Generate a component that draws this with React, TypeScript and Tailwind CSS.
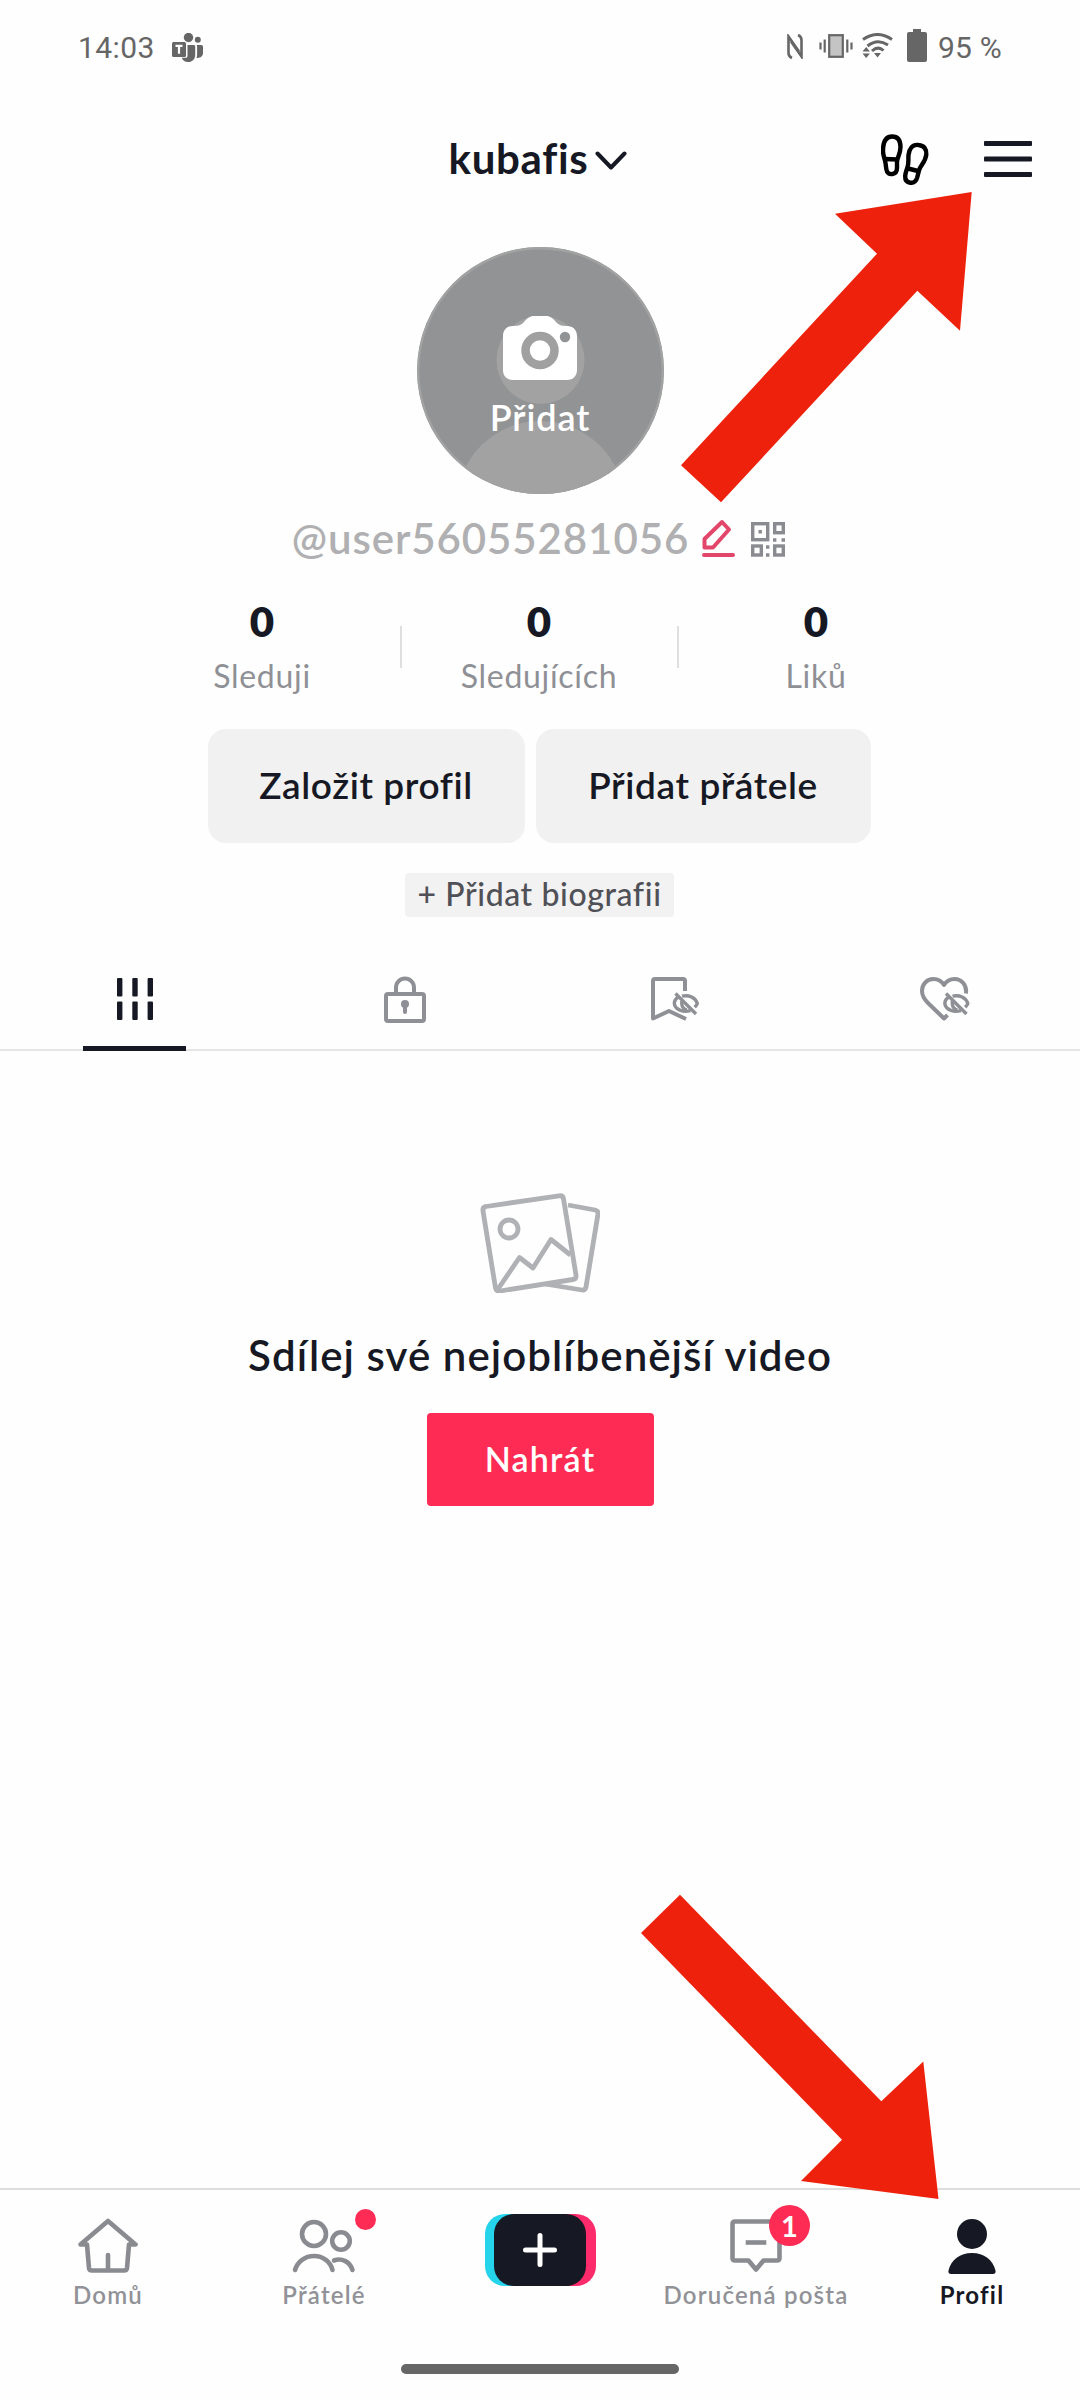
import type { ReactNode } from "react"
import clsx from "clsx"

function TeamsIcon() {
  return (
    <svg width="32" height="30" viewBox="0 0 32 30" fill="#666">
      <circle cx="16.5" cy="4.5" r="4.7" />
      <circle cx="25.8" cy="6.8" r="3" />
      <path d="M24.5 12h4.7c1.1 0 1.8.7 1.8 1.8v6c0 3.3-2.3 5.2-5.200 5.200-.8 0-1.300-.1-1.300-.1.4-1 .6-2.200.6-3.400V13.500c0-.6-.2-1.100-.6-1.500z" />
      <path d="M15.500 12h6.200c.8 0 1.500.7 1.500 1.500v8.200c0 4.200-2.800 7.300-7 7.300-3.200 0-5.500-1.600-6.500-4.300h4.300c.9 0 1.500-.7 1.500-1.500z" />
      <rect x="0" y="9" width="14" height="15" rx="1.500" />
      <path d="M3.500 12.800h7M7 12.800v8" stroke="#fff" strokeWidth="2.200" fill="none" />
    </svg>
  )
}

function StatusBar() {
  return (
    <div className="flex h-24 items-center justify-between px-[78px] font-['Roboto'] text-[30px] leading-none text-[#666]">
      <div className="flex items-center">
        <span className="tracking-[0.4px]">14:03</span>
        <span className="ml-[17px]">
          <TeamsIcon />
        </span>
      </div>
      <div className="flex items-center">
        <svg width="16" height="25" viewBox="0 0 16 25" className="-mt-1" fill="none" stroke="#666" strokeWidth="2.600">
          <path d="M5 24c-2.500-1-3.500-2-3.500-5V2.500L12 17.500" />
          <path d="M11 1c2.500 1 3.500 2 3.500 5v16.500L4 7.500" />
        </svg>
        <svg width="34" height="24" viewBox="0 0 34 24" className="-mt-1 ml-4" stroke="#666" strokeWidth="2.200">
          <rect x="10.200" y="1.200" width="13.600" height="21.600" fill="#c4c4c4" />
          <path d="M1.500 8.500v7M5.700 5.500v13M28.300 5.500v13M32.500 8.500v7" />
        </svg>
        <svg width="31" height="26" viewBox="0 0 31 26" className="-mt-1 ml-[9px]" fill="none" stroke="#666" strokeWidth="3">
          <path d="M1 6.500Q15.500-3.500 30 6.500" />
          <path d="M5.500 13Q15.500 5 26 12" />
          <path d="M10 18Q16 12.500 21.500 17.500" />
          <path d="M.5 18.500L4.200 14l3.700 4.500zM.5 20.500L4.200 25l3.700-4.500zM12 20h7l-3.500 4.500z" fill="#666" stroke="none" />
        </svg>
        <svg width="20" height="33" viewBox="0 0 20 33" className="-mt-1.5 ml-[14px]" fill="#666">
          <path d="M6 0h8v3h4a2 2 0 0 1 2 2v26a2 2 0 0 1-2 2H2a2 2 0 0 1-2-2V5a2 2 0 0 1 2-2h4z" />
        </svg>
        <span className="ml-[11px] tracking-[0.2px]">95 %</span>
      </div>
    </div>
  )
}

function Header() {
  return (
    <header className="grid h-[124px] grid-cols-[1fr_auto_1fr] items-center pr-12">
      <div />
      <div className="flex items-center pl-[43px] text-[#161823]">
        <h1 className="text-[42px] leading-none font-bold tracking-[0.7px]">kubafis</h1>
        <svg width="32" height="20" viewBox="0 0 32 20" className="mt-[5px] ml-[6px]" fill="none" stroke="currentColor" strokeWidth="4">
          <path d="M2.500 2.500L16 16.500L29.500 2.500" strokeLinecap="round" strokeLinejoin="round" />
        </svg>
      </div>
      <div className="flex items-center justify-end gap-[55px]">
        <svg width="48" height="52" viewBox="0 0 48 52" className="mt-[3px]" fill="none" stroke="#000" strokeWidth="4.400" strokeLinejoin="round">
          <path d="M11 2.500C5 2.500 2 8 2 17c0 5 2 8 2.500 12l.8 6c.6 4 3 5.500 6 5 3.500-.5 4.700-3 4.700-6V28c0-4 3.500-8 3.500-15C19.500 6 17 2.500 11 2.500z" />
          <path d="M4 25l12.500.5" />
          <path d="M37.500 11c-6-1-9.500 4-10 10-.4 5 .5 8-1 12-1 4-2 5-2.300 9-.2 4 2 6.300 5 6.700 4 .5 6-1.700 7-5.200l1.800-7c1-5 6.500-8 7.300-16 .5-5-2-9-7.800-9.500z" />
          <path d="M27 34.500l12 3" />
        </svg>
        <svg width="48" height="36" viewBox="0 0 48 36" className="mt-[2px]" fill="#161823">
          <rect y="0" width="48" height="5" rx="1" />
          <rect y="15.500" width="48" height="5" rx="1" />
          <rect y="31" width="48" height="5" rx="1" />
        </svg>
      </div>
    </header>
  )
}

function Avatar() {
  return (
    <div className="relative mt-[27px] flex size-[247px] flex-col items-center overflow-hidden rounded-full bg-[#919394] pt-[69px]">
      <svg className="absolute inset-0" width="247" height="247" viewBox="0 0 247 247" fill="#a2a2a2">
        <circle cx="123.500" cy="113" r="44" />
        <circle cx="123.500" cy="258" r="84" />
        <circle cx="123.500" cy="123.500" r="122.300" fill="none" stroke="#a2a2a2" strokeWidth="2.400" />
      </svg>
      <svg className="relative" width="74" height="64" viewBox="0 0 74 64" fill="#fff">
        <path d="M10 10c5 0 8-.5 11-4s5.500-6 10-6h12c4.500 0 7 2.500 10 6s6 4 11 4c6 0 10 4 10 10v34c0 6-4 10-10 10H10C4 64 0 60 0 54V20c0-6 4-10 10-10z" />
        <circle cx="37" cy="34.500" r="14.500" fill="none" stroke="#a0a0a0" strokeWidth="8.500" />
        <circle cx="62" cy="21" r="5.200" fill="#919394" />
      </svg>
      <span className="relative mt-[19px] text-[36px] leading-none font-semibold tracking-[0.9px] text-white">Přidat</span>
    </div>
  )
}

function UserHandle() {
  return (
    <div className="mt-[22px] flex h-11 items-center pr-[3px]">
      <span className="text-[42px] leading-none font-semibold tracking-[0.9px] text-[#b0b0b2]">@user56055281056</span>
      <svg width="33" height="38" viewBox="0 0 33 38" className="ml-[13px]" fill="none" stroke="#e2476b" strokeWidth="4" strokeLinejoin="round">
        <path d="M2.500 28.500V20L20 3l7 7.500L11 28.500z" />
        <path d="M2 36h29" strokeLinecap="round" />
      </svg>
      <svg width="34" height="35" viewBox="0 0 34 35" className="mt-0.5 ml-4" fill="none" stroke="#8a8b91" strokeWidth="3.400">
        <rect x="1.700" y="1.700" width="15" height="16" />
        <rect x="23.700" y="1.700" width="8.600" height="9" />
        <rect x="1.700" y="24" width="8.600" height="9" />
        <rect x="23.700" y="24" width="8.600" height="9" />
        <path d="M7.500 9.700h3.400M22 18h3.400M30.500 18H34M15 25h3.400M15 33h3.400" />
      </svg>
    </div>
  )
}

const stats = [
  { value: "0", label: "Sleduji" },
  { value: "0", label: "Sledujících" },
  { value: "0", label: "Liků" },
]

function Stats() {
  return (
    <div className="mt-10 flex pr-0.5">
      {stats.map((stat, i) => (
        <div key={stat.label} className="flex">
          {i > 0 && <div className="mt-[26px] h-[42px] w-0.5 bg-[#dfdfdf]" />}
          <div className="flex w-[275px] flex-col items-center">
            <span className="text-[42px] leading-[42px] font-extrabold text-[#161823]">{stat.value}</span>
            <span className="mt-[14px] text-[32px] leading-[40px] tracking-[0.7px] text-[#8f9095]">{stat.label}</span>
          </div>
        </div>
      ))}
    </div>
  )
}

function GridIcon() {
  return (
    <svg width="36" height="42" viewBox="0 0 36 42" fill="#161823">
      {[0, 15.3, 30.6].map((x) => (
        <g key={x}>
          <rect x={x} y="0" width="5.400" height="18.500" rx="1" />
          <rect x={x} y="23.500" width="5.400" height="18.500" rx="1" />
        </g>
      ))}
    </svg>
  )
}

function LockIcon() {
  return (
    <svg width="42" height="47" viewBox="0 0 42 47" fill="none" stroke="#8f9095" strokeWidth="4">
      <rect x="2" y="18" width="38" height="27" rx="2" />
      <path d="M12 18v-6.500a9 9 0 0 1 18 0V18" />
      <circle cx="21" cy="28" r="4" fill="#8f9095" stroke="none" />
      <path d="M21 28v8" strokeLinecap="round" />
    </svg>
  )
}

// struck-out eye shared by the two "hidden" tabs
function HiddenEye() {
  return (
    <g strokeWidth="3.400">
      <path d="M31 19.200c7-1.700 13.500 1.300 15.300 7.300-.5 1.500-1.300 2.500-2.600 3.800" />
      <path d="M27 20.200c-4.300 3-4.800 7.300-1.500 10.800 3.500 3.200 8.500 4 14 2.700" />
      <path d="M30.800 24v3c.2 3 2 5 5 5.800" />
      <path d="M24.500 16.500l20.500 20.500" />
    </g>
  )
}

function BookmarkIcon() {
  return (
    <svg width="48" height="44" viewBox="0 0 48 44" fill="none" stroke="#8f9095" strokeWidth="4" strokeLinejoin="round">
      <path d="M34 14V4a2 2 0 0 0-2-2H4a2 2 0 0 0-2 2v37.500L18 34l17 8" />
      <HiddenEye />
    </svg>
  )
}

function HeartIcon() {
  return (
    <svg width="50" height="44" viewBox="0 0 50 44" fill="none" stroke="#8f9095" strokeWidth="4" strokeLinejoin="round">
      <path d="M46 16.500C47 8 41.500 2 34.500 2 30 2 26.500 4 24 8 21.500 4 18 2 13.500 2 6.500 2 2 7.500 2 14c0 5 2.500 8.500 6 12l16 15.500 3.500-3.500" />
      <g transform="translate(1.5 0)">
        <HiddenEye />
      </g>
    </svg>
  )
}

function Tabs() {
  const tabs: ReactNode[] = [<GridIcon />, <LockIcon />, <BookmarkIcon />, <HeartIcon />]

  return (
    <div className="mt-[30px] grid h-[104px] w-full grid-cols-4 border-b-2 border-[#e6e6e6]">
      {tabs.map((icon, i) => (
        <div key={i} className="relative flex items-center justify-center pt-0.5">
          {icon}
          {i === 0 && <div className="absolute -bottom-0.5 left-[83px] h-[5px] w-[103px] bg-[#161823]" />}
        </div>
      ))}
    </div>
  )
}

function EmptyState() {
  return (
    <div className="mt-[142px] flex flex-col items-center">
      <svg width="120" height="100" viewBox="0 0 120 100" fill="none" stroke="#b0b1b5" strokeWidth="4.800" strokeLinejoin="round">
        <path d="M88 12l27 5q3.500 1 3 4L106 94q-1 3.500-4 3L65 91" />
        <path d="M6 13.500L79 2.800q4-.5 4.500 3L96 82q.5 4-3 4.500L20 98q-4 .5-4.500-3L3 18q-.5-4 3-4.500z" />
        <circle cx="29" cy="36" r="9" />
        <path d="M18 96l21.500-31.500L53 75l18-28.500L90.500 62" />
      </svg>
      <h2 className="mt-[38px] text-[42px] leading-[48px] font-semibold tracking-[1.050px] text-[#161823]">
        Sdílej své nejoblíbenější video
      </h2>
      <button className="mt-[34px] h-[93px] w-[227px] rounded bg-[#fe2c55] pb-[3px] text-[34px] font-semibold tracking-[1.200px] text-white">
        Nahrát
      </button>
    </div>
  )
}

function NavItem({ label, active, children }: { label: string; active?: boolean; children: ReactNode }) {
  return (
    <div className="flex flex-col items-center">
      <div className="relative flex h-[64px] items-center justify-center">{children}</div>
      <span
        className={clsx(
          "mt-0.5 text-[24px] leading-[30px] tracking-[1.200px] whitespace-nowrap",
          active ? "font-bold text-[#161823]" : "font-semibold text-[#919297]"
        )}
      >
        {label}
      </span>
    </div>
  )
}

function BottomNav() {
  return (
    <nav className="mt-auto h-[212px] w-full border-t-2 border-[#dedede]">
      <div className="grid grid-cols-5 pt-6">
        <NavItem label="Domů">
          <svg width="62" height="56" viewBox="0 0 62 56" fill="none" stroke="#8a8b91" strokeWidth="4.600" strokeLinejoin="round" strokeLinecap="round">
            <path d="M10 26.500H3.500L31 3l27.500 23.500H52L50 50q-.3 2.500-3 2.500H15q-2.700 0-3-2.500z" />
            <path d="M31 37v15" />
          </svg>
        </NavItem>
        <NavItem label="Přátelé">
          <svg width="64" height="54" viewBox="0 0 64 54" fill="none" stroke="#8a8b91" strokeWidth="4.600" strokeLinecap="round">
            <circle cx="22" cy="15" r="12" />
            <circle cx="49" cy="22" r="8.800" />
            <path d="M3 51c2.500-8.500 10-14 19-14s16.500 5.500 18.500 14" />
            <path d="M42 41.500c8-3 16 1.500 18.500 9.500" />
          </svg>
          <div className="absolute top-[-5px] right-[-20px] size-[21px] rounded-full bg-[#fe2c55]" />
        </NavItem>
        <div className="flex justify-center">
          <div className="flex h-[72px] w-[111px] items-center justify-center rounded-[20px] bg-linear-to-r from-[#25d4eb] from-50% to-[#fd2b6c] to-50%">
            <div className="flex h-[72px] w-[92px] items-center justify-center rounded-[20px] bg-[#161823]">
              <svg width="34" height="34" viewBox="0 0 34 34" stroke="#fff" strokeWidth="5" strokeLinecap="round">
                <path d="M2.500 17h29M17 2.500v29" />
              </svg>
            </div>
          </div>
        </div>
        <NavItem label="Doručená pošta">
          <svg width="52" height="54" viewBox="0 0 52 54" fill="none" stroke="#8a8b91" strokeWidth="4.600" strokeLinejoin="round">
            <path d="M5 2.500h42q2.500 0 2.500 2.500v34q0 2.500-2.500 2.500H33.500L26 50.500l-7.500-9H5q-2.500 0-2.500-2.500V5Q2.500 2.500 5 2.500z" />
            <path d="M18 23.500h16" strokeLinecap="square" />
          </svg>
          <span className="absolute top-[-9px] left-[39px] flex size-[41px] items-center justify-center rounded-full bg-[#fe2c55] text-[29px] leading-none font-bold text-white">
            1
          </span>
        </NavItem>
        <NavItem label="Profil" active>
          <svg width="48" height="56" viewBox="0 0 48 56" fill="#161823">
            <circle cx="24" cy="16" r="15" />
            <path d="M24 35c12 0 21 7 23.500 17.500.5 2-.5 3.500-2.500 3.500H3C1 56 0 54.500.500 52.500 3 42 12 35 24 35z" />
          </svg>
        </NavItem>
      </div>
      <div className="mx-auto mt-[54px] h-2.5 w-[278px] rounded-full bg-[#666]" />
    </nav>
  )
}

export default function App() {
  return (
    <main className="relative flex h-[2400px] w-[1080px] flex-col overflow-hidden bg-[#fefefe] font-['Lato','Liberation_Sans',sans-serif]">
      <StatusBar />
      <Header />
      <section className="flex flex-col items-center">
        <Avatar />
        <UserHandle />
        <Stats />
        <div className="mt-[33px] flex gap-[11px] pr-0.5 text-[37px] font-semibold tracking-[0.600px] text-[#161823]">
          <button className="h-[114px] w-[317px] rounded-[18px] bg-[#f1f1f1] pb-[3px]">Založit profil</button>
          <button className="h-[114px] w-[335px] rounded-[18px] bg-[#f1f1f1] pb-[3px]">Přidat přátele</button>
        </div>
        <button className="mt-[30px] mr-px h-11 w-[269px] rounded bg-[#f2f2f2] pb-0.5 text-[32px] leading-none font-medium tracking-[0.600px] text-[#505057]">
          + Přidat biografii
        </button>
        <Tabs />
        <EmptyState />
      </section>
      <BottomNav />

      {/* pointers to the menu and the profile tab */}
      <svg className="absolute top-[192px] left-[681px]" width="292" height="311" viewBox="0 0 292 311" fill="#ee220c">
        <path d="M290.700 0L154 21.700L196 61.700L0 273.300L40 310.300L236.300 98.700L279 138.700z" />
      </svg>
      <svg className="absolute top-[1894px] left-[641px]" width="298" height="305" viewBox="0 0 298 305" fill="#ee220c">
        <path d="M297.500 305L282.300 167.500L240.300 207.300L39 .700L0 39L201 245.700L160 287z" />
      </svg>
    </main>
  )
}
